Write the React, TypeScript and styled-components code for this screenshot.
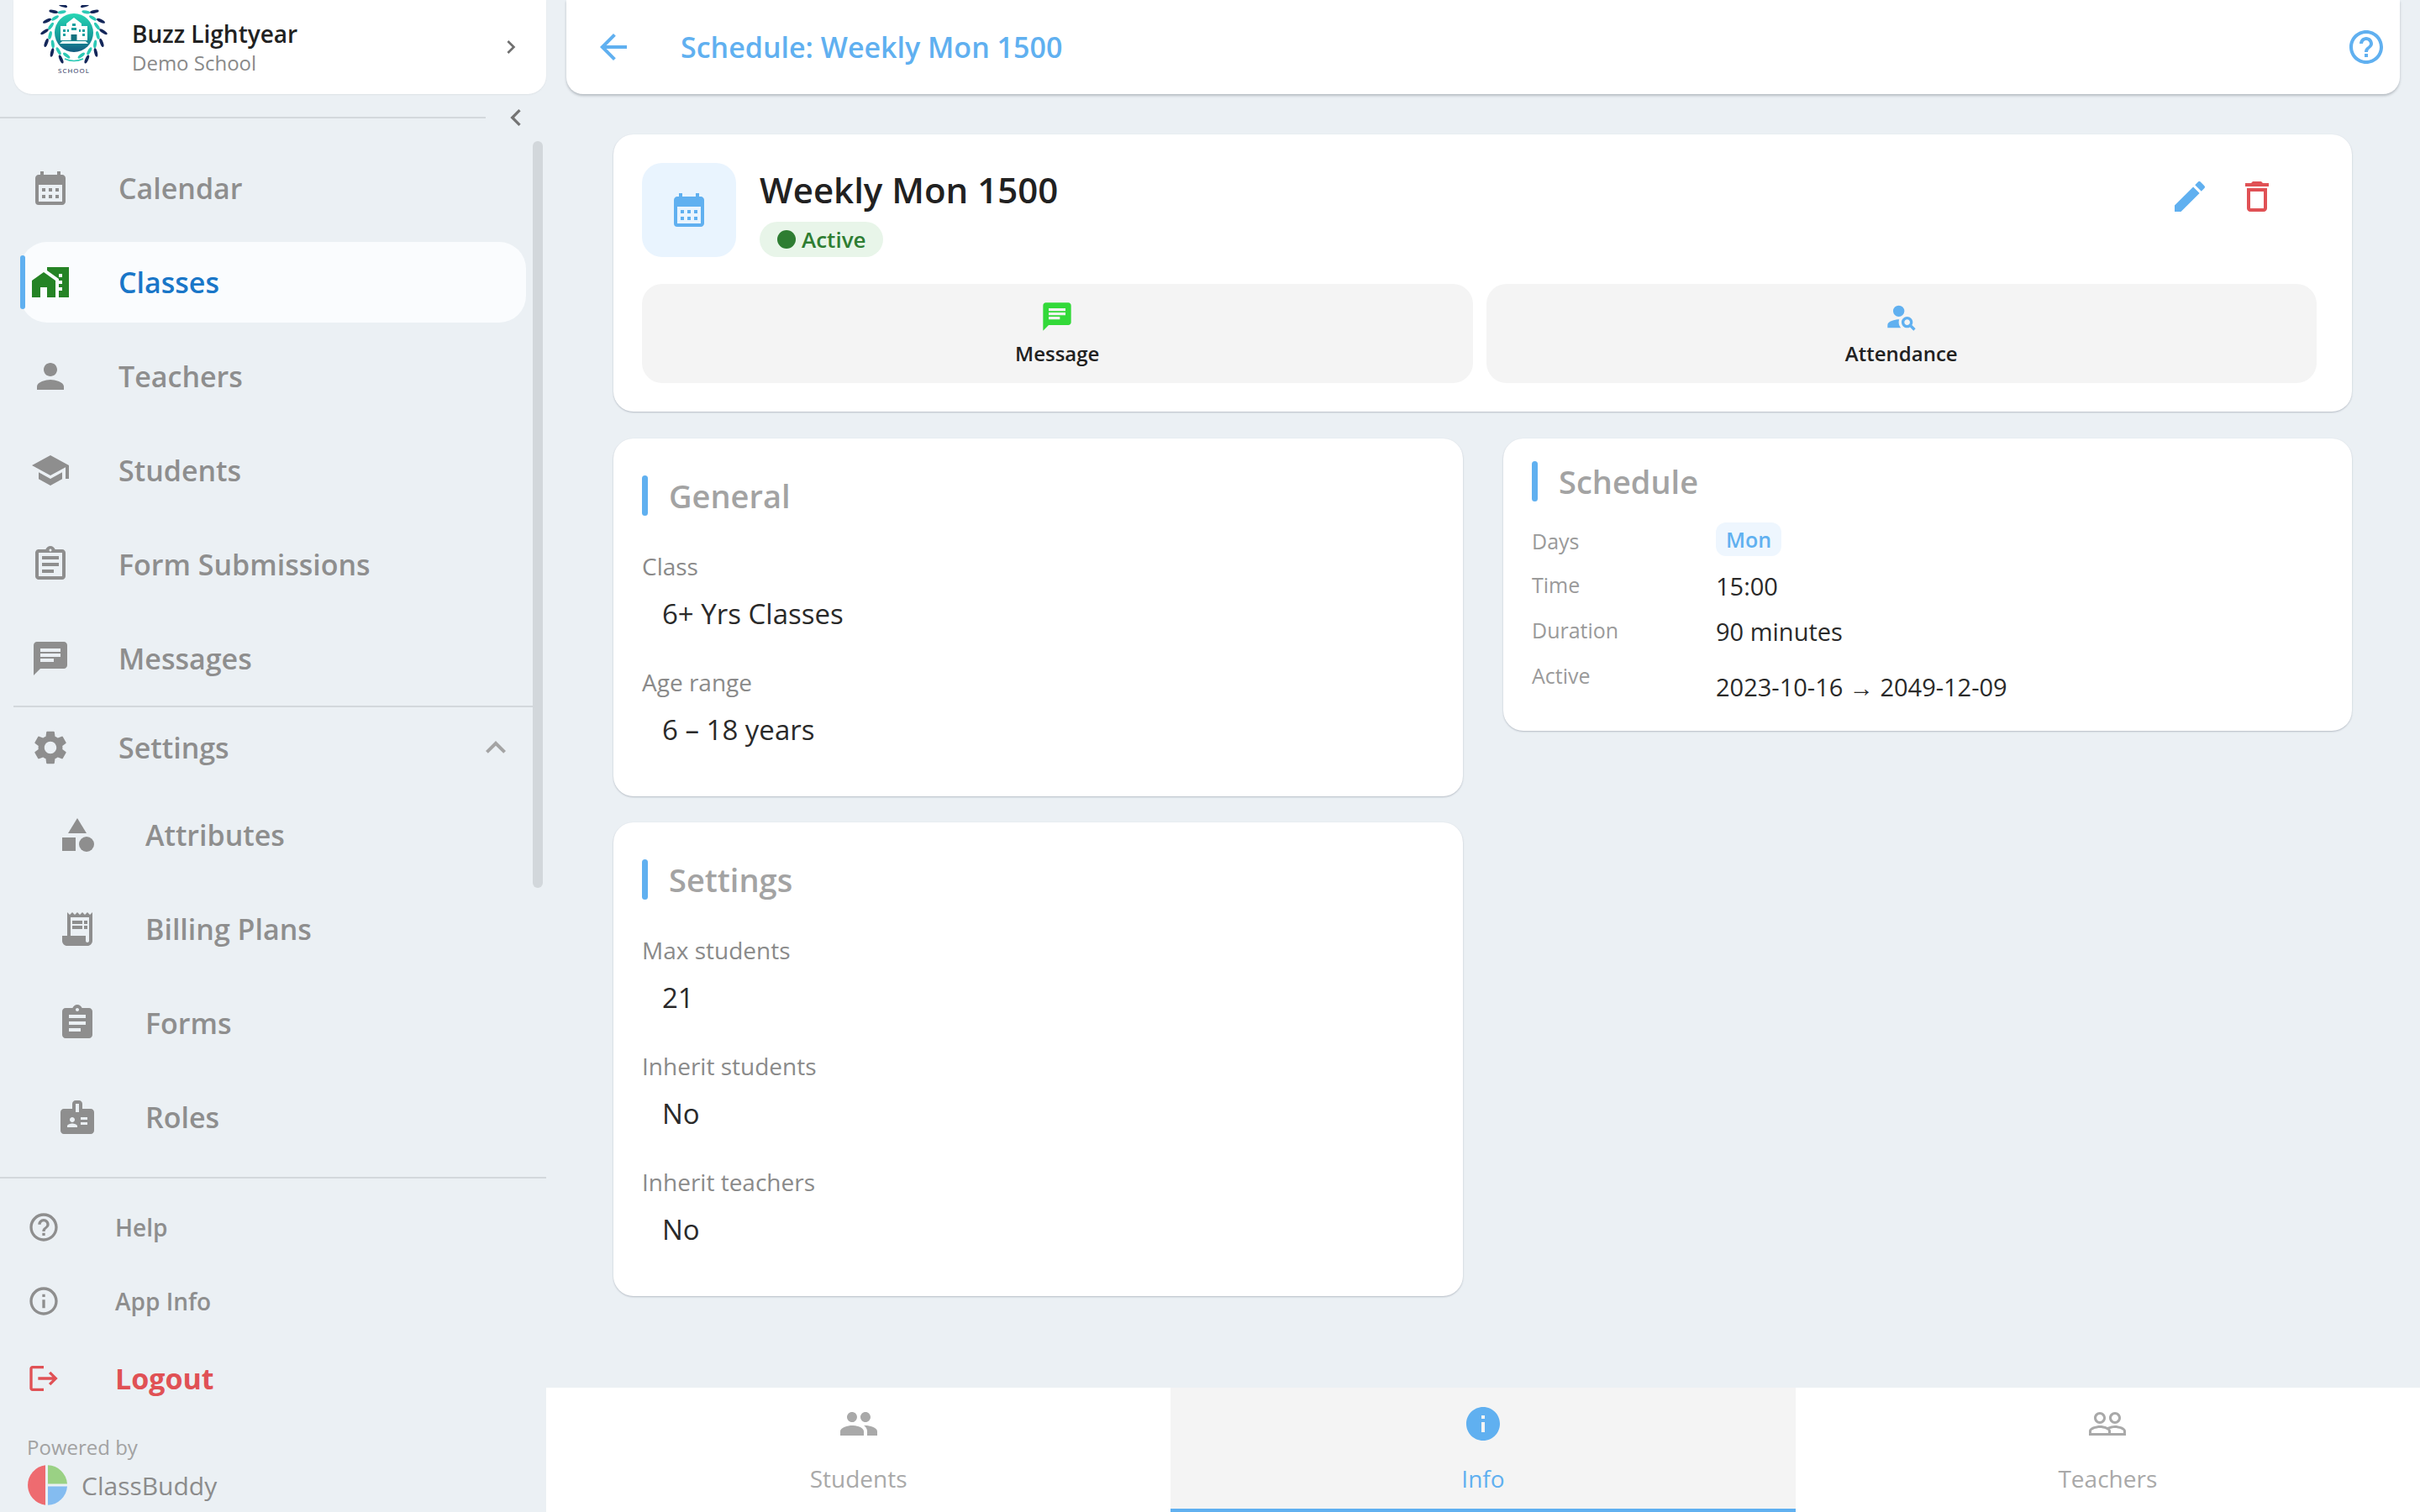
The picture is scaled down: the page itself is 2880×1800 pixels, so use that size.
import React from "react";
import styled, { createGlobalStyle } from "styled-components";
import {
  MdCalendarMonth, MdMapsHomeWork, MdPerson, MdSchool, MdOutlineAssignment, MdChat, MdSettings,
  MdExpandLess, MdCategory, MdReceiptLong, MdAssignment, MdBadge, MdHelpOutline, MdInfoOutline,
  MdLogout, MdChevronRight, MdChevronLeft, MdArrowBack, MdEdit, MdDeleteOutline, MdPersonSearch,
  MdPeople, MdInfo, MdPeopleOutline,
} from "react-icons/md";

const BLUE = "#60b0f0";
const RED = "#e05155";
const GREY = "#8e8e8e";

const Global = createGlobalStyle`
  html, body { margin: 0; padding: 0; }
  body { background: #ebf0f4; font-family: "Open Sans", "Noto Sans", sans-serif; }
  * { box-sizing: border-box; }
`;

const Page = styled.div`
  width: 2880px; height: 1800px; display: grid; grid-template-columns: 650px 1fr; overflow: hidden; background: #ebf0f4;
`;

/* ---------- sidebar ---------- */
const Sidebar = styled.aside`display: flex; flex-direction: column; height: 1800px;`;
const ProfileCard = styled.div`
  margin-left: 16px; height: 112px; background: #fff; border-radius: 0 0 22px 22px; display: flex; align-items: center;
  padding: 0 26px 0 32px; box-shadow: 0 1px 2px rgba(0,0,0,.06);
`;
const ProfileText = styled.div`flex: 1; margin-left: 29px; display: flex; flex-direction: column;`;
const ProfileName = styled.div`font-size: 28px; font-weight: 600; color: #212121; line-height: 38px; margin-top: -2px;`;
const ProfileSub = styled.div`font-size: 24px; color: #8a8a8a; line-height: 30px; margin-top: 1px;`;
const ProfileChevron = styled.div`color: #6f6f6f; font-size: 32px; display: flex;`;
const CollapseRow = styled.div`height: 56px; display: flex; align-items: center; padding-bottom: 0;`;
const Rule = styled.div`flex: 0 0 578px; height: 2px; background: #d3d8dc;`;
const CollapseBtn = styled.div`color: #747474; font-size: 40px; display: flex; margin-left: 16px;`;
const NavList = styled.nav`position: relative; height: 1233px; overflow: hidden;`;
const Thumb = styled.div`position: absolute; top: 0; right: 4px; width: 12px; height: 889px; border-radius: 6px; background: #d2d7db;`;
const NavRow = styled.div<{ $sub?: boolean; $h?: number }>`
  height: ${(p) => p.$h ?? 112}px; display: flex; align-items: center; padding: 8px 0;
  width: 602px; margin-left: 24px; color: ${GREY};
`;
const Pill = styled.div<{ $active?: boolean; $sub?: boolean }>`
  position: relative; flex: 1; height: 100%; display: flex; align-items: center; border-radius: 32px;
  padding-left: ${(p) => (p.$sub ? 44 : 12)}px;
  background: ${(p) => (p.$active ? "#fafcfe" : "transparent")};
  font-size: 48px;
  ${(p) => p.$active && `&::before { content: ""; position: absolute; left: 0; top: 16px; bottom: 16px; width: 6px; border-radius: 3px; background: ${BLUE}; }`}
`;
const NavIcon = styled.span<{ $color?: string }>`display: flex; width: 48px; height: 48px; color: ${(p) => p.$color ?? GREY};`;
const NavLabel = styled.span<{ $active?: boolean }>`
  margin-left: 57px; font-size: 34px; font-weight: 600; color: ${(p) => (p.$active ? "#1976c8" : GREY)};
`;
const NavTail = styled.span`margin-left: auto; margin-right: 12px; display: flex; color: #a4a4a4; font-size: 48px;`;
const NavDivider = styled.div`height: 2px; margin: 0 16px; background: #d3d8dc;`;
const Footer = styled.div`border-top: 2px solid #d3d8dc; padding-top: 14px; flex: 1;`;
const FootRow = styled.div<{ $h: number }>`height: ${(p) => p.$h}px; display: flex; align-items: center; padding-left: 32px;`;
const FootIcon = styled.span<{ $color?: string }>`
  width: 40px; height: 48px; display: flex; align-items: center; justify-content: center; color: ${(p) => p.$color ?? GREY};
`;
const FootLabel = styled.span<{ $red?: boolean }>`
  margin-left: 65px; font-weight: ${(p) => (p.$red ? 700 : 600)}; font-size: ${(p) => (p.$red ? 34 : 28)}px;
  color: ${(p) => (p.$red ? RED : GREY)};
`;
const Powered = styled.div`margin: 17px 0 0 32px; font-size: 24px; line-height: 34px; color: #a2a2a2;`;
const BrandRow = styled.div`margin: 4px 0 0 32px; display: flex; align-items: center; gap: 17px;`;
const BrandName = styled.span`font-size: 30px; color: #8c8c8c;`;

/* ---------- main ---------- */
const Main = styled.main`display: flex; flex-direction: column; height: 1800px; min-width: 0;`;
const TopBar = styled.header`
  margin: 0 24px; height: 112px; flex: none; background: #fff; border-radius: 0 0 20px 20px; display: flex; align-items: center;
  padding: 0 16px 0 32px; box-shadow: 0 2px 3px rgba(60,70,80,.3);
`;
const BarIcon = styled.span`display: flex; color: ${BLUE};`;
const BarTitle = styled.h1`
  margin: 0 0 0 56px; flex: 1; font-size: 34px; font-weight: 600; color: ${BLUE}; line-height: 48px;
`;
const Content = styled.div`flex: 1; padding: 48px 81px 0 80px; min-height: 0;`;
const Card = styled.section<{ $pt?: number; $pb?: number }>`
  background: #fff; border-radius: 24px; box-shadow: 0 1px 2px rgba(60,70,90,.3);
  padding: ${(p) => p.$pt ?? 44}px 34px ${(p) => p.$pb ?? 55}px;
`;
const Hero = styled(Card)`padding: 34px 42px 34px 34px; height: 330px; margin-bottom: 32px;`;
const HeroTop = styled.div`display: flex; height: 112px; margin-bottom: 32px;`;
const HeroIcon = styled.div`
  width: 112px; height: 112px; border-radius: 24px; background: #e9f4fe; color: ${BLUE};
  display: flex; align-items: center; justify-content: center; flex: none;
`;
const HeroInfo = styled.div`margin-left: 28px; flex: 1; display: flex; flex-direction: column; align-items: flex-start;`;
const HeroTitle = styled.h2`margin: 0; font-size: 42px; font-weight: 600; color: #212121; line-height: 60px; margin-top: 2px;`;
const StatusChip = styled.div`
  margin-top: 8px; height: 46px; padding: 0 20px 0 21px; border-radius: 23px; background: #e8f5e9; color: #2e7d32;
  display: flex; align-items: center; gap: 7px; font-size: 26px; font-weight: 600;
`;
const StatusDot = styled.span`width: 22px; height: 22px; border-radius: 50%; background: #2e7d32;`;
const HeroActions = styled.div`display: flex; gap: 32px; margin: 16px 47px 0 0;`;
const ActionGlyph = styled.span<{ $c: string }>`display: flex; color: ${(p) => p.$c}; height: 48px;`;
const QuickGrid = styled.div`display: grid; grid-template-columns: 1fr 1fr; gap: 16px;`;
const QuickBtn = styled.div`
  height: 118px; border-radius: 24px; background: #f4f4f4; display: flex; flex-direction: column; align-items: center;
  padding-top: 19px; font-size: 24px; font-weight: 600; color: #212121;
`;
const QuickIcon = styled.span<{ $c: string }>`display: flex; color: ${(p) => p.$c}; height: 40px;`;
const QuickLabel = styled.span`margin-top: 7px; line-height: 34px;`;
const Columns = styled.div`display: grid; grid-template-columns: 1011px 1010px; gap: 48px; align-items: start;`;
const Stack = styled.div`display: flex; flex-direction: column; gap: 31px;`;
const Heading = styled.div`
  display: flex; align-items: center; gap: 25px; height: 48px; font-size: 38px; font-weight: 600; color: #a3a3a3;
  &::before { content: ""; width: 7px; height: 48px; border-radius: 4px; background: ${BLUE}; }
`;
const Fields = styled.div`margin-top: 40px; display: flex; flex-direction: column; gap: 37px;`;
const Field = styled.div`display: flex; flex-direction: column;`;
const FieldLabel = styled.div`font-size: 28px; line-height: 40px; color: #8a8a8a;`;
const FieldValue = styled.div`margin: 13px 0 0 24px; font-size: 33px; line-height: 48px; color: #2a2a2a;`;
const Rows = styled.div`margin-top: 25px; display: flex; flex-direction: column; gap: 10px;`;
const Row = styled.div`display: flex; align-items: flex-start;`;
const RowLabel = styled.div<{ $tall?: boolean }>`
  flex: 0 0 219px; font-size: 25px; line-height: ${(p) => (p.$tall ? 44 : 40)}px; color: #9a9a9a;
`;
const RowValue = styled.div<{ $low?: boolean }>`
  font-size: 29px; line-height: 44px; color: #2a2a2a; padding-top: ${(p) => (p.$low ? 12 : 0)}px;
`;
const DayChip = styled.span`
  display: flex; align-items: center; height: 40px; padding: 0 12px; border-radius: 12px; background: #eef6fe; color: ${BLUE};
  font-size: 25px; font-weight: 600;
`;
const Tabs = styled.div`flex: none; height: 148px; display: grid; grid-template-columns: repeat(3, 1fr); background: #fff;`;
const Tab = styled.div<{ $on?: boolean }>`
  display: flex; flex-direction: column; align-items: center; padding-top: 19px; color: ${(p) => (p.$on ? BLUE : "#a9a9a9")};
  background: ${(p) => (p.$on ? "#f4f4f4" : "#fff")}; border-bottom: 4px solid ${(p) => (p.$on ? BLUE : "transparent")};
`;
const TabIcon = styled.span`display: flex; height: 48px;`;
const TabLabel = styled.span`margin-top: 21px; font-size: 28px; line-height: 40px;`;

function SchoolLogo() {
  const cx = 40;
  const cy = 33;
  const angles = [22, 44, 66, 88, 110, 132, 154];
  const leaf = (side: number, a: number, r: number, tilt: number, fill: string, rx: number, key: string) => {
    const rad = (a * Math.PI) / 180;
    const x = cx + side * Math.sin(rad) * r;
    const y = cy - Math.cos(rad) * r;
    const rot = side * (a + tilt);
    return <ellipse key={key} cx={x} cy={y} rx={rx} ry={1.9} fill={fill} transform={`rotate(${rot} ${x} ${y})`} />;
  };
  return (
    <svg width="80" height="100" viewBox="0 0 80 100" style={{ flex: "none" }}>
      <defs>
        <linearGradient id="crest" x1="0" y1="0" x2="0" y2="1">
          <stop offset="0" stopColor="#27d6b4" />
          <stop offset="0.6" stopColor="#169a9a" />
          <stop offset="1" stopColor="#135a80" />
        </linearGradient>
      </defs>
      {[1, -1].map((s) =>
        angles.map((a, i) => (
          <g key={`${s}${a}`}>
            {leaf(s, a, 35, i % 2 ? -55 : -40, "#14275a", 5.4, `o${s}${a}`)}
            {leaf(s, a + 8, 28.5, -20, "#2cc9b5", 5, `i${s}${a}`)}
          </g>
        ))
      )}
      <circle cx={cx} cy={cy} r="23" fill="url(#crest)" />
      <path d="M40 15l9 7v3h7v17H24V25h7v-3z" fill="#fff" />
      <path d="M36.5 35h7v7h-7z" fill="#14717f" />
      <path d="M27 29h3v3h-3zM32 29h2v3h-2zM46 29h2v3h-2zM50 29h3v3h-3zM27 34h3v3h-3zM50 34h3v3h-3zM38 22h4v3h-4zM37 27h6v3h-6z" fill="#1aa0a0" />
      <path d="M26 43h28l3 3H23z" fill="#e9fbf8" />
      <path d="M29 64q11 5 22 0" fill="none" stroke="#2cc9b5" strokeWidth="1.6" />
      <text x="40" y="81" fontSize="8" textAnchor="middle" fill="#1b2b55" fontFamily="Open Sans" letterSpacing="1">SCHOOL</text>
    </svg>
  );
}

function BrandMark() {
  return (
    <svg width="48" height="48" viewBox="0 0 48 48">
      <path d="M22 0.2A24 24 0 0 0 22 47.8z" fill="#ee6b70" />
      <path d="M25 0.2A24 24 0 0 1 48 22.5H25z" fill="#9ad184" />
      <path d="M25 25.5H48A24 24 0 0 1 25 47.8z" fill="#84bcf0" />
    </svg>
  );
}

const mainNav = [
  { label: "Calendar", icon: <MdCalendarMonth size={48} /> },
  { label: "Classes", icon: <MdMapsHomeWork size={48} />, active: true },
  { label: "Teachers", icon: <MdPerson size={48} /> },
  { label: "Students", icon: <MdSchool size={48} /> },
  { label: "Form Submissions", icon: <MdOutlineAssignment size={48} /> },
  { label: "Messages", icon: <MdChat size={48} /> },
];
const subNav = [
  { label: "Attributes", icon: <MdCategory size={48} /> },
  { label: "Billing Plans", icon: <MdReceiptLong size={48} /> },
  { label: "Forms", icon: <MdAssignment size={48} /> },
  { label: "Roles", icon: <MdBadge size={48} /> },
];

function FieldBlock({ label, value }: { label: string; value: string }) {
  return (
    <Field>
      <FieldLabel>{label}</FieldLabel>
      <FieldValue>{value}</FieldValue>
    </Field>
  );
}

export default function App() {
  return (
    <Page>
      <Global />
      <Sidebar>
        <ProfileCard>
          <SchoolLogo />
          <ProfileText>
            <ProfileName>Buzz Lightyear</ProfileName>
            <ProfileSub>Demo School</ProfileSub>
          </ProfileText>
          <ProfileChevron><MdChevronRight /></ProfileChevron>
        </ProfileCard>
        <CollapseRow>
          <Rule />
          <CollapseBtn><MdChevronLeft /></CollapseBtn>
        </CollapseRow>
        <NavList>
          <Thumb />
          {mainNav.map((n) => (
            <NavRow key={n.label}>
              <Pill $active={n.active}>
                <NavIcon $color={n.active ? "#258325" : undefined}>{n.icon}</NavIcon>
                <NavLabel $active={n.active}>{n.label}</NavLabel>
              </Pill>
            </NavRow>
          ))}
          <NavDivider />
          <NavRow $h={96}>
            <Pill>
              <NavIcon><MdSettings size={48} /></NavIcon>
              <NavLabel>Settings</NavLabel>
              <NavTail><MdExpandLess /></NavTail>
            </Pill>
          </NavRow>
          {subNav.map((n) => (
            <NavRow key={n.label}>
              <Pill $sub>
                <NavIcon>{n.icon}</NavIcon>
                <NavLabel>{n.label}</NavLabel>
              </Pill>
            </NavRow>
          ))}
        </NavList>
        <Footer>
          <FootRow $h={88}>
            <FootIcon><MdHelpOutline size={40} /></FootIcon>
            <FootLabel>Help</FootLabel>
          </FootRow>
          <FootRow $h={88}>
            <FootIcon><MdInfoOutline size={40} /></FootIcon>
            <FootLabel>App Info</FootLabel>
          </FootRow>
          <FootRow $h={96}>
            <FootIcon $color={RED}><MdLogout size={48} /></FootIcon>
            <FootLabel $red>Logout</FootLabel>
          </FootRow>
          <Powered>Powered by</Powered>
          <BrandRow>
            <BrandMark />
            <BrandName>ClassBuddy</BrandName>
          </BrandRow>
        </Footer>
      </Sidebar>
      <Main>
        <TopBar>
          <BarIcon><MdArrowBack size={48} /></BarIcon>
          <BarTitle>Schedule: Weekly Mon 1500</BarTitle>
          <BarIcon><MdHelpOutline size={48} /></BarIcon>
        </TopBar>
        <Content>
          <Hero>
            <HeroTop>
              <HeroIcon><MdCalendarMonth size={48} /></HeroIcon>
              <HeroInfo>
                <HeroTitle>Weekly Mon 1500</HeroTitle>
                <StatusChip><StatusDot />Active</StatusChip>
              </HeroInfo>
              <HeroActions>
                <ActionGlyph $c={BLUE}><MdEdit size={48} /></ActionGlyph>
                <ActionGlyph $c={RED}><MdDeleteOutline size={48} /></ActionGlyph>
              </HeroActions>
            </HeroTop>
            <QuickGrid>
              <QuickBtn>
                <QuickIcon $c="#33d939"><MdChat size={40} /></QuickIcon>
                <QuickLabel>Message</QuickLabel>
              </QuickBtn>
              <QuickBtn>
                <QuickIcon $c={BLUE}><MdPersonSearch size={40} /></QuickIcon>
                <QuickLabel>Attendance</QuickLabel>
              </QuickBtn>
            </QuickGrid>
          </Hero>
          <Columns>
            <Stack>
              <Card>
                <Heading>General</Heading>
                <Fields>
                  <FieldBlock label="Class" value="6+ Yrs Classes" />
                  <FieldBlock label="Age range" value="6 – 18 years" />
                </Fields>
              </Card>
              <Card>
                <Heading>Settings</Heading>
                <Fields>
                  <FieldBlock label="Max students" value="21" />
                  <FieldBlock label="Inherit students" value="No" />
                  <FieldBlock label="Inherit teachers" value="No" />
                </Fields>
              </Card>
            </Stack>
            <Card $pt={27} $pb={30}>
              <Heading>Schedule</Heading>
              <Rows>
                <Row>
                  <RowLabel $tall>Days</RowLabel>
                  <DayChip>Mon</DayChip>
                </Row>
                <Row>
                  <RowLabel>Time</RowLabel>
                  <RowValue>15:00</RowValue>
                </Row>
                <Row>
                  <RowLabel>Duration</RowLabel>
                  <RowValue>90 minutes</RowValue>
                </Row>
                <Row>
                  <RowLabel>Active</RowLabel>
                  <RowValue $low>2023-10-16 → 2049-12-09</RowValue>
                </Row>
              </Rows>
            </Card>
          </Columns>
        </Content>
        <Tabs>
          <Tab>
            <TabIcon><MdPeople size={48} /></TabIcon>
            <TabLabel>Students</TabLabel>
          </Tab>
          <Tab $on>
            <TabIcon><MdInfo size={48} /></TabIcon>
            <TabLabel>Info</TabLabel>
          </Tab>
          <Tab>
            <TabIcon><MdPeopleOutline size={48} /></TabIcon>
            <TabLabel>Teachers</TabLabel>
          </Tab>
        </Tabs>
      </Main>
    </Page>
  );
}
